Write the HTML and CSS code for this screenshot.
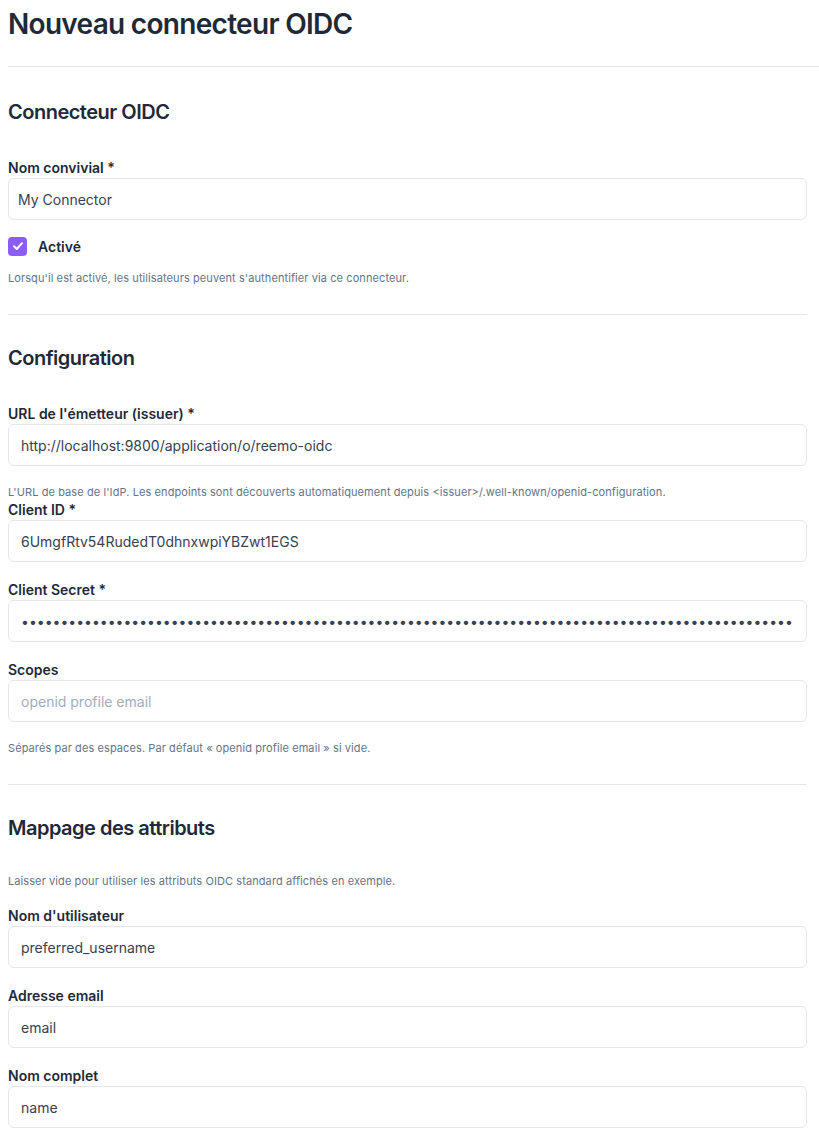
FILE: index.html
```html
<!DOCTYPE html>
<html lang="fr">
<head>
<meta charset="utf-8">
<title>Nouveau connecteur OIDC</title>
<link rel="stylesheet" href="styles.css">
</head>
<body>
<div class="page">
  <header class="page-head">
    <h1 class="page-title">Nouveau connecteur OIDC</h1>
  </header>
  <form class="form">
    <section class="sec sec-first">
      <h2 class="sec-title">Connecteur OIDC</h2>
      <div class="field">
        <label class="label" for="name">Nom convivial *</label>
        <input class="input input-first" id="name" type="text" value="My Connector">
      </div>
      <label class="check-row">
        <span class="check-box">
          <svg width="14" height="14" viewBox="0 0 14 14"><path d="M3 7.3 L5.8 10 L11 4.2" fill="none" stroke="#fff" stroke-width="2" stroke-linecap="round" stroke-linejoin="round"/></svg>
        </span>
        <span class="check-label">Activé</span>
      </label>
      <p class="help help-check">Lorsqu'il est activé, les utilisateurs peuvent s'authentifier via ce connecteur.</p>
    </section>

    <section class="sec">
      <h2 class="sec-title">Configuration</h2>
      <div class="field">
        <label class="label" for="issuer">URL de l'émetteur (issuer) *</label>
        <input class="input" id="issuer" type="text" value="http://localhost:9800/application/o/reemo-oidc">
      </div>
      <p class="help">L'URL de base de l'IdP. Les endpoints sont découverts automatiquement depuis &lt;issuer&gt;/.well-known/openid-configuration.</p>
      <div class="field">
        <label class="label" for="cid">Client ID *</label>
        <input class="input" id="cid" type="text" value="6UmgfRtv54RudedT0dhnxwpiYBZwt1EGS">
      </div>
      <div class="field">
        <label class="label" for="secret">Client Secret *</label>
        <input class="input" id="secret" type="password" value="xxxxxxxxxxxxxxxxxxxxxxxxxxxxxxxxxxxxxxxxxxxxxxxxxxxxxxxxxxxxxxxxxxxxxxxxxxxxxxxxxxxxxxxxxxxxxxxxxxxxxxxxxxxxxxxx">
      </div>
      <div class="field">
        <label class="label" for="scopes">Scopes</label>
        <input class="input" id="scopes" type="text" placeholder="openid profile email">
      </div>
      <p class="help help-end">Séparés par des espaces. Par défaut « openid profile email » si vide.</p>
    </section>

    <section class="sec sec-last">
      <h2 class="sec-title">Mappage des attributs</h2>
      <p class="help help-intro">Laisser vide pour utiliser les attributs OIDC standard affichés en exemple.</p>
      <div class="field">
        <label class="label" for="uname">Nom d'utilisateur</label>
        <input class="input" id="uname" type="text" value="preferred_username">
      </div>
      <div class="field">
        <label class="label" for="email">Adresse email</label>
        <input class="input" id="email" type="text" value="email">
      </div>
      <div class="field">
        <label class="label" for="full">Nom complet</label>
        <input class="input" id="full" type="text" value="name">
      </div>
    </section>
  </form>
</div>
</body>
</html>
```

FILE: styles.css
```css
* { box-sizing: border-box; }
html, body { margin: 0; padding: 0; background: #fff; }
body {
  font-family: Inter, "Noto Sans", "Liberation Sans", sans-serif;
  color: #1f2937;
}
.page { padding: 6px 0 0 8px; }
.page-head {
  border-bottom: 1px solid #e5e7eb;
  padding-bottom: 24px;
}
.page-title {
  margin: 0;
  font-size: 28px;
  line-height: 36px;
  font-weight: 600;
  letter-spacing: -0.025em;
  color: #1f2937;
}
.form { padding-right: 12px; }
.sec {
  padding: 29px 0 28px;
  border-bottom: 1px solid #e5e7eb;
}
.sec-first { padding-top: 31px; }
.sec-last { border-bottom: none; }
.sec-title {
  margin: 0 0 32px;
  font-size: 20px;
  line-height: 28px;
  font-weight: 600;
  letter-spacing: -0.025em;
  color: #1f2937;
}
.field { margin-bottom: 18px; }
.label {
  display: block;
  font-size: 14px;
  line-height: 20px;
  font-weight: 600;
  color: #1f2937;
}
.input {
  display: block;
  width: 100%;
  height: 42px;
  border: 1px solid #e5e7eb;
  border-radius: 6px;
  padding: 0 12px;
  font-family: Inter, "Noto Sans", "Liberation Sans", sans-serif;
  font-size: 14px;
  color: #374151;
  background: #fff;
  outline: none;
}
.input-first { padding-left: 9px; }
.input::placeholder { color: #a0aec0; }
.check-row {
  display: flex;
  align-items: center;
  gap: 11px;
  height: 20px;
  margin-top: -2px;
}
.check-box {
  width: 19px;
  height: 19px;
  border-radius: 4px;
  background: #8b5cf6;
  display: flex;
  align-items: center;
  justify-content: center;
}
.check-label {
  font-size: 14px;
  font-weight: 600;
  color: #1f2937;
}
.help {
  margin: 0;
  font-size: 11px;
  line-height: 16px;
  letter-spacing: 0.09px;
  color: #64748b;
}
.help-check { margin-top: 14px; }
.help-intro { margin-top: 0; margin-bottom: 17px; }
.sec-last .sec-title { margin-bottom: 31px; }
```
